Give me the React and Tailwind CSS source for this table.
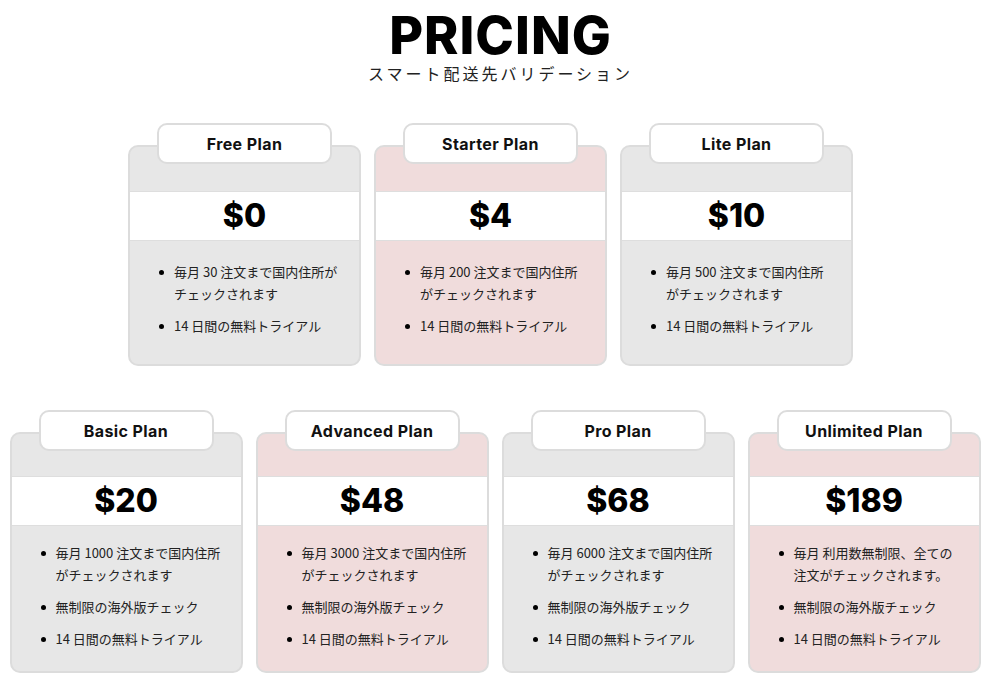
import React from "react";

const plansTop = [
    {
        name: "Free Plan",
        price: "$0",
        pink: false,
        features: ["毎月 30 注文まで国内住所がチェックされます", "14 日間の無料トライアル"],
    },
    {
        name: "Starter Plan",
        price: "$4",
        pink: true,
        features: ["毎月 200 注文まで国内住所がチェックされます", "14 日間の無料トライアル"],
    },
    {
        name: "Lite Plan",
        price: "$10",
        pink: false,
        features: ["毎月 500 注文まで国内住所がチェックされます", "14 日間の無料トライアル"],
    },
];

const plansBottom = [
    {
        name: "Basic Plan",
        price: "$20",
        pink: false,
        features: ["毎月 1000 注文まで国内住所がチェックされます", "無制限の海外版チェック", "14 日間の無料トライアル"],
    },
    {
        name: "Advanced Plan",
        price: "$48",
        pink: true,
        features: ["毎月 3000 注文まで国内住所がチェックされます", "無制限の海外版チェック", "14 日間の無料トライアル"],
    },
    {
        name: "Pro Plan",
        price: "$68",
        pink: false,
        features: ["毎月 6000 注文まで国内住所がチェックされます", "無制限の海外版チェック", "14 日間の無料トライアル"],
    },
    {
        name: "Unlimited Plan",
        price: "$189",
        pink: true,
        features: ["毎月 利用数無制限、全ての注文がチェックされます。", "無制限の海外版チェック", "14 日間の無料トライアル"],
    },
];

function PlanCard({ plan, compact }) {
    return (
        <div
            className={`w-[233px] rounded-[10px] border-2 border-[#dcdcdc] flex flex-col ${
                plan.pink ? "bg-[#f0dcdc]" : "bg-[#e7e7e7]"
            }`}
        >
            {/* Tab label sitting over the top edge */}
            <div className="mx-auto -mt-[24px] w-[175px] h-[41px] rounded-[10px] border-2 border-[#dcdcdc] bg-white flex items-center justify-center text-[16px] tracking-[0.4px] font-bold text-[#111] font-[Inter,sans-serif]">
                {plan.name}
            </div>

            <div
                className={`${compact ? "mt-[25px]" : "mt-[27px]"} h-[50px] bg-white border-y border-[#dedede] flex items-center justify-center text-[32px] font-extrabold text-black font-[Inter,sans-serif]`}
            >
                {plan.price}
            </div>

            <ul
                className={`${
                    compact ? "pt-[16px] pb-[21px]" : "pt-[20px] pb-[27px]"
                } pl-[29px] pr-[15px] flex flex-col gap-[10px] text-[13px] leading-[22px] text-[#222] font-['Noto_Sans_CJK_JP',sans-serif]`}
            >
                {plan.features.map((f) => (
                    <li key={f} className="flex gap-[10px]">
                        <span className="mt-[9px] w-[5px] h-[5px] rounded-full bg-black shrink-0" />
                        <span>{f}</span>
                    </li>
                ))}
            </ul>
        </div>
    );
}

export default function App() {
    return (
        <div className="w-[990px] h-[684px] bg-white flex flex-col items-center overflow-hidden">
            <h1 className="mt-[14px] ml-[11px] text-[52px] leading-[44px] font-extrabold tracking-[1px] text-black font-[Inter,sans-serif]">
                PRICING
            </h1>
            <p className="mt-[5px] ml-[11px] text-[16px] leading-[20px] tracking-[3px] text-[#222] font-['Noto_Sans_CJK_JP',sans-serif]">
                スマート配送先バリデーション
            </p>

            <div className="mt-[62px] mr-[9px] flex gap-[13px] items-start">
                {plansTop.map((p) => (
                    <PlanCard key={p.name} plan={p} />
                ))}
            </div>

            <div className="mt-[66px] flex gap-[13px] items-stretch">
                {plansBottom.map((p) => (
                    <PlanCard key={p.name} plan={p} compact />
                ))}
            </div>
        </div>
    );
}
